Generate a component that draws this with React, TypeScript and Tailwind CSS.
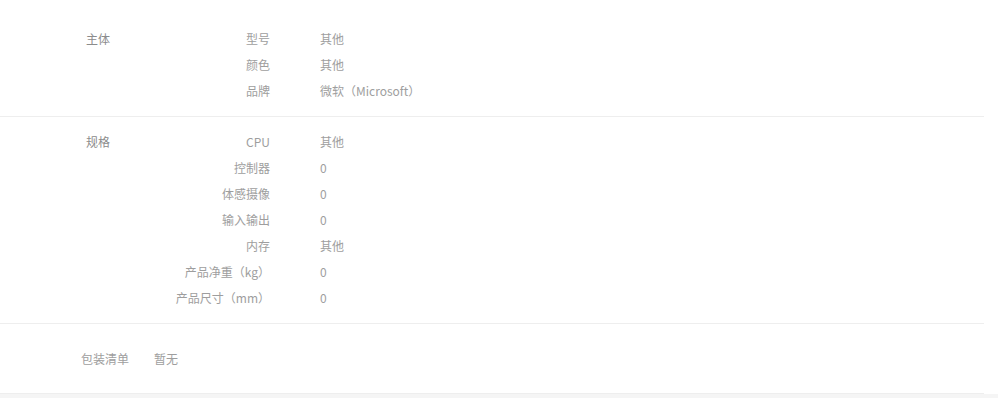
import React from 'react';

type Item = { label: string; value: string };

const groups: { title: string; items: Item[] }[] = [
  {
    title: '主体',
    items: [
      { label: '型号', value: '其他' },
      { label: '颜色', value: '其他' },
      { label: '品牌', value: '微软（Microsoft）' },
    ],
  },
  {
    title: '规格',
    items: [
      { label: 'CPU', value: '其他' },
      { label: '控制器', value: '0' },
      { label: '体感摄像', value: '0' },
      { label: '输入输出', value: '0' },
      { label: '内存', value: '其他' },
      { label: '产品净重（kg）', value: '0' },
      { label: '产品尺寸（mm）', value: '0' },
    ],
  },
];

function Group({ title, items, first }: { title: string; items: Item[]; first?: boolean }) {
  return (
    <div className={`flex border-b border-[#eeeeee] pl-[86px] ${first ? 'pt-[26px] pb-[12px]' : 'pt-[12px] pb-[12px]'}`}>
      <div className="w-[50px] leading-[26px] text-[#8c8c8c]">{title}</div>
      <dl className="grid grid-cols-[134px_1fr] gap-x-[50px]">
        {items.map((it) => (
          <React.Fragment key={it.label}>
            <dt className="text-right leading-[26px]">{it.label}</dt>
            <dd className="leading-[26px]">{it.value}</dd>
          </React.Fragment>
        ))}
      </dl>
    </div>
  );
}

export default function App() {
  return (
    <div
      className="w-[998px] h-[398px] bg-white text-[12px] text-[#9e9e9e] overflow-hidden"
      style={{ fontFamily: '"Noto Sans CJK SC", "Liberation Sans", sans-serif' }}
    >
      <div className="w-[984px]">
        {groups.map((g, i) => (
          <Group key={g.title} title={g.title} items={g.items} first={i === 0} />
        ))}
        {/* 包装清单 */}
        <div className="flex items-center h-[70px] pl-[81px] border-b border-[#eeeeee]">
          <span className="w-[73px]">包装清单</span>
          <span>暂无</span>
        </div>
      </div>
      <div className="h-[10px] bg-[#f5f5f5]" />
    </div>
  );
}
